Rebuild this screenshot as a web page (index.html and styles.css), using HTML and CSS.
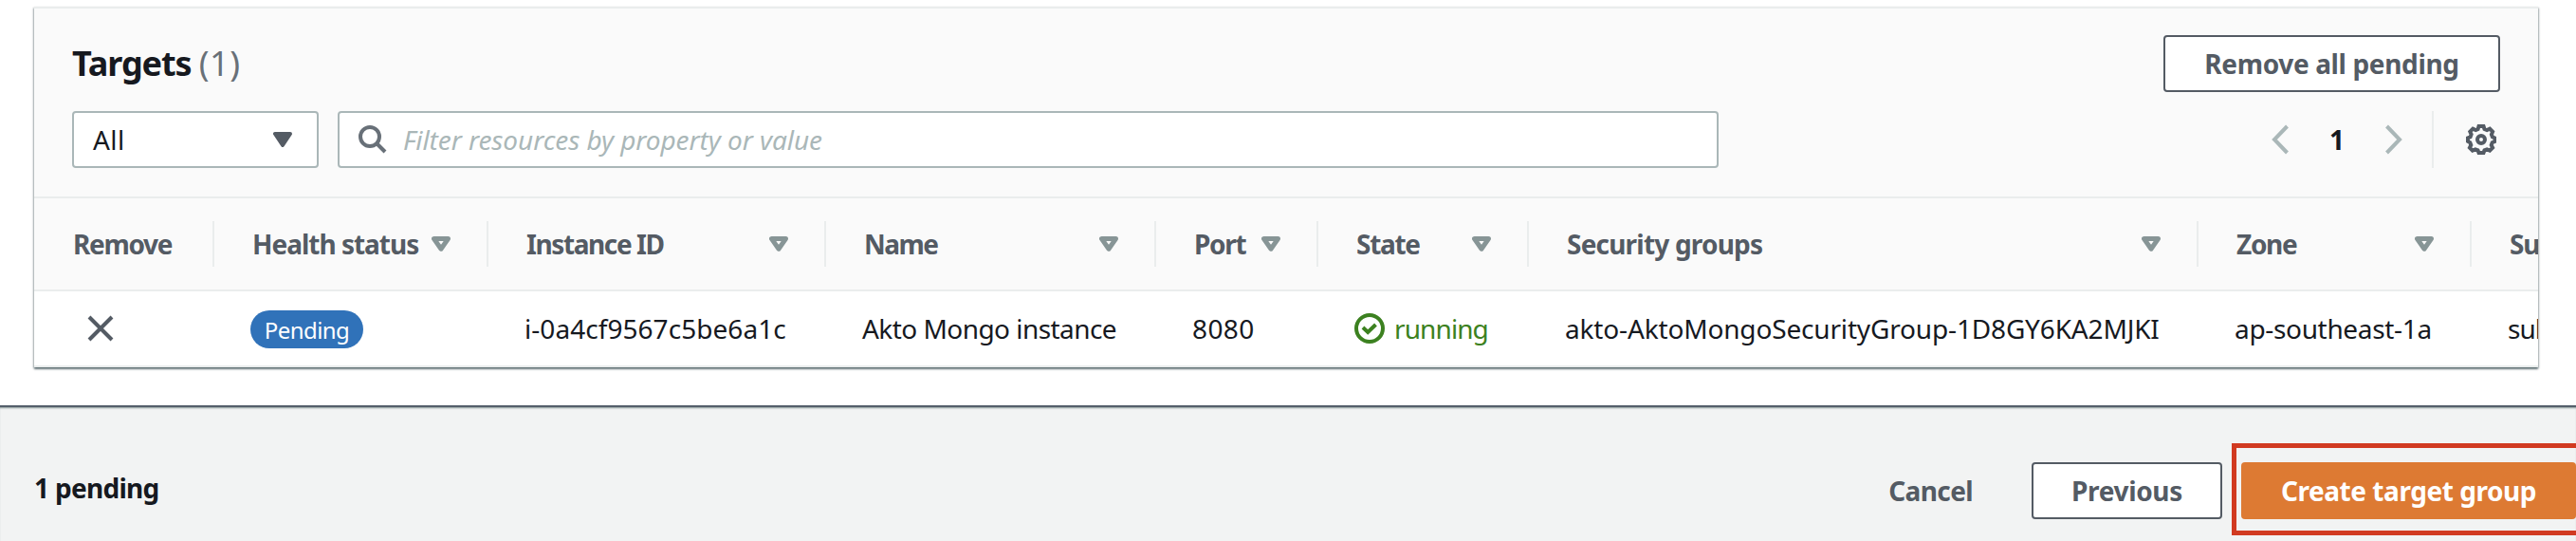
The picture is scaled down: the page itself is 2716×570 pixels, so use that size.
FILE: index.html
```html
<!DOCTYPE html>
<html lang="en">
<head>
<meta charset="utf-8">
<title>Register targets</title>
<link rel="stylesheet" href="styles.css">
</head>
<body>
<svg class="defs" width="0" height="0" aria-hidden="true">
  <symbol id="sort" viewBox="0 0 20 16"><path d="M2.500 2.500h15L10 13.200z" fill="none" stroke="currentColor" stroke-width="5" stroke-linejoin="round"/></symbol>
</svg>
<main class="page">
  <section class="panel">
    <header class="panel-head">
      <div class="title-row">
        <h2 class="title">Targets <span class="count">(1)</span></h2>
        <button class="btn btn-remove"><span>Remove all pending</span></button>
      </div>
      <div class="tools">
        <div class="select"><span>All</span>
          <svg width="20" height="16" viewBox="0 0 20 16"><path d="M2 2h16L10 14z" fill="#545b64" stroke="#545b64" stroke-width="4" stroke-linejoin="round"/></svg>
        </div>
        <div class="search">
          <svg width="32" height="32" viewBox="0 0 32 32" fill="none" stroke="#687078" stroke-width="4"><circle cx="13" cy="13" r="10"/><path d="M20 20l9 9"/></svg>
          <span class="placeholder">Filter resources by property or value</span>
        </div>
        <nav class="pager">
          <svg width="18" height="32" viewBox="0 0 18 32" fill="none" stroke="#aab7b8" stroke-width="4"><path d="M16.500 2L3 16l13.500 14"/></svg>
          <b class="page-no">1</b>
          <svg width="18" height="32" viewBox="0 0 18 32" fill="none" stroke="#aab7b8" stroke-width="4"><path d="M1.500 2L15 16 1.500 30"/></svg>
        </nav>
        <div class="settings">
          <svg width="32" height="32" viewBox="0 0 32 32" fill="none" stroke="#545b64" stroke-width="4" stroke-linejoin="miter"><path d="M13.500 2h5l1 3 2.600 1 3-1.300 3 3-1.200 3 1 2.600 2.600 1.200v3.500l-2.800 1.200-1 2.600 1.400 2.800-3 3-3-1.300-2.600 1-1 2.700h-5l-1-2.700-2.600-1-3 1.300-3-3 1.400-2.800-1-2.600L2 17.900v-3.500l2.600-1.200 1-2.600-1.300-3 3-3 3 1.400 2.300-1z"/><circle cx="16" cy="16" r="4"/></svg>
        </div>
      </div>
    </header>
    <div class="grid grid-head">
      <div class="th th-first"><span>Remove</span></div>
      <div class="th th-health"><span>Health status</span><svg class="sort"><use href="#sort"/></svg></div>
      <div class="th th-instance"><span>Instance ID</span><svg class="sort"><use href="#sort"/></svg></div>
      <div class="th th-name"><span>Name</span><svg class="sort"><use href="#sort"/></svg></div>
      <div class="th th-port"><span>Port</span><svg class="sort"><use href="#sort"/></svg></div>
      <div class="th th-state"><span>State</span><svg class="sort"><use href="#sort"/></svg></div>
      <div class="th th-sg"><span>Security groups</span><svg class="sort"><use href="#sort"/></svg></div>
      <div class="th th-zone"><span>Zone</span><svg class="sort"><use href="#sort"/></svg></div>
      <div class="th th-last"><span>Subnet</span></div>
    </div>
    <div class="grid grid-row">
      <div class="td td-first"><svg width="28" height="28" viewBox="0 0 28 28" fill="none" stroke="#545b64" stroke-width="4"><path d="M2 2l24 24M26 2L2 26"/></svg></div>
      <div class="td"><span class="badge"><span>Pending</span></span></div>
      <div class="td td-id"><span>i-0a4cf9567c5be6a1c</span></div>
      <div class="td td-name"><span>Akto Mongo instance</span></div>
      <div class="td td-port"><span>8080</span></div>
      <div class="td td-state"><svg width="32" height="32" viewBox="0 0 32 32" fill="none" stroke="#3c8120" stroke-width="4"><circle cx="16" cy="16" r="14"/><path d="M9 15l5.200 5 8.300-8"/></svg><span>running</span></div>
      <div class="td td-sg"><span>akto-AktoMongoSecurityGroup-1D8GY6KA2MJKI</span></div>
      <div class="td td-zone"><span>ap-southeast-1a</span></div>
      <div class="td td-last"><span>subnet</span></div>
    </div>
  </section>
</main>
<footer class="footer">
  <b class="pending">1 pending</b>
  <div class="actions">
    <button class="cancel"><span>Cancel</span></button>
    <button class="btn btn-prev"><span>Previous</span></button>
    <div class="highlight"><button class="btn btn-create"><span>Create target group</span></button></div>
  </div>
</footer>
</body>
</html>
```
FILE: styles.css
```css
* { box-sizing: border-box; }
body {
  margin: 0;
  width: 2716px;
  height: 570px;
  overflow: hidden;
  display: flex;
  flex-direction: column;
  background: #fff;
  color: #16191f;
  font: 28px/40px "Noto Sans", "Open Sans", sans-serif;
  white-space: nowrap;
}
.defs { display: block; flex: none; height: 0; }
svg { display: block; flex: none; }
button { font: inherit; font-weight: 700; white-space: nowrap; }
.page { flex: none; height: 427px; padding: 7px 40px 0 36px; }
.panel {
  height: 380px;
  overflow: hidden;
  border-top: 2px solid #eaeded;
  background: #fff;
  box-shadow: 0 2px 2px rgba(0, 28, 36, .5), 1px 1px 2px rgba(0, 28, 36, .2), -1px 1px 2px rgba(0, 28, 36, .2);
}
.panel-head {
  height: 200px;
  padding: 28px 40px 0;
  background: #fafafa;
  border-bottom: 2px solid #eaeded;
}
.title-row { display: flex; justify-content: space-between; height: 80px; }
.title { margin: 0; font-size: 36px; line-height: 60px; letter-spacing: -1.1px; }
.count { font-weight: 400; color: #687078; letter-spacing: .6px; }
.btn {
  height: 60px;
  padding: 0;
  border: 2px solid #545b64;
  border-radius: 4px;
  background: #fff;
  color: #545b64;
  letter-spacing: -.35px;
}
.btn-remove { width: 355px; }
.tools { display: flex; height: 60px; }
.select, .search {
  display: flex;
  align-items: center;
  height: 60px;
  border: 2px solid #aab7b8;
  border-radius: 4px;
  background: #fff;
}
.select { width: 260px; padding: 0 26px 0 20px; justify-content: space-between; margin-right: 20px; letter-spacing: .4px; }
.search { width: 1456px; padding-left: 19px; gap: 16px; }
.placeholder { font-style: italic; color: #aab7b8; letter-spacing: -.08px; }
.pager { display: flex; align-items: center; margin-left: 583px; gap: 43px; }
.settings {
  display: flex;
  align-items: center;
  margin-left: 31px;
  padding-left: 34px;
  border-left: 2px solid #eaeded;
}
.grid { display: grid; grid-template-columns: 190px 289px 356px 348px 171px 222px 706px 288px 200px; }
.grid-head { height: 98px; align-items: center; background: #fafafa; border-bottom: 2px solid #eaeded; }
.th {
  display: flex;
  align-items: center;
  justify-content: space-between;
  height: 48px;
  padding: 0 38px 0 40px;
  border-right: 2px solid #eaeded;
  color: #545b64;
  font-weight: 700;
  letter-spacing: -1.3px;
}
.th-first { padding-left: 41px; }
.th-health { letter-spacing: -1px; }
.th-instance { letter-spacing: -1.4px; }
.th-name { letter-spacing: -1.5px; }
.th-sg { letter-spacing: -.8px; }
.sort { width: 20px; height: 16px; color: #879596; }
.grid-row { height: 80px; align-items: center; border-bottom: 2px solid #eaeded; }
.td { display: flex; align-items: center; padding-left: 38px; letter-spacing: -.55px; }
.td-first { padding-left: 56px; }
.td-id { letter-spacing: .05px; }
.td-port { letter-spacing: .4px; }
.td-sg { letter-spacing: -.16px; }
.td-zone { letter-spacing: -.33px; }
.td-last { letter-spacing: -1px; }
.badge {
  width: 119px;
  height: 40px;
  border-radius: 20px;
  background: #3072b9;
  color: #fff;
  font-size: 24px;
  line-height: 42px;
  text-align: center;
  position: relative;
  top: 1px;
}
.td-state { gap: 10px; color: #3c8120; letter-spacing: -.9px; }
.footer {
  flex: none;
  display: flex;
  justify-content: space-between;
  height: 143px;
  padding: 38px 0 0 36px;
  border-top: 2px solid #545f6b;
  background: #f2f3f3;
  box-shadow: inset 0 2px 2px -1px #879596;
}
.pending { line-height: 60px; margin-top: 17px; letter-spacing: -.7px; }
.actions { display: flex; }
.cancel { height: 60px; margin: 20px 62px 0 0; padding: 0; border: 0; background: none; color: #545b64; letter-spacing: -.6px; }
.btn-prev { width: 201px; margin: 20px 10px 0 0; }
.highlight { width: 363px; height: 97px; padding: 15px 0 0 5px; border: 5px solid #d13a21; border-right: 0; }
.btn-create { width: 353px; border: 0; background: #dd7a33; color: #fff; letter-spacing: -.45px; }
```
